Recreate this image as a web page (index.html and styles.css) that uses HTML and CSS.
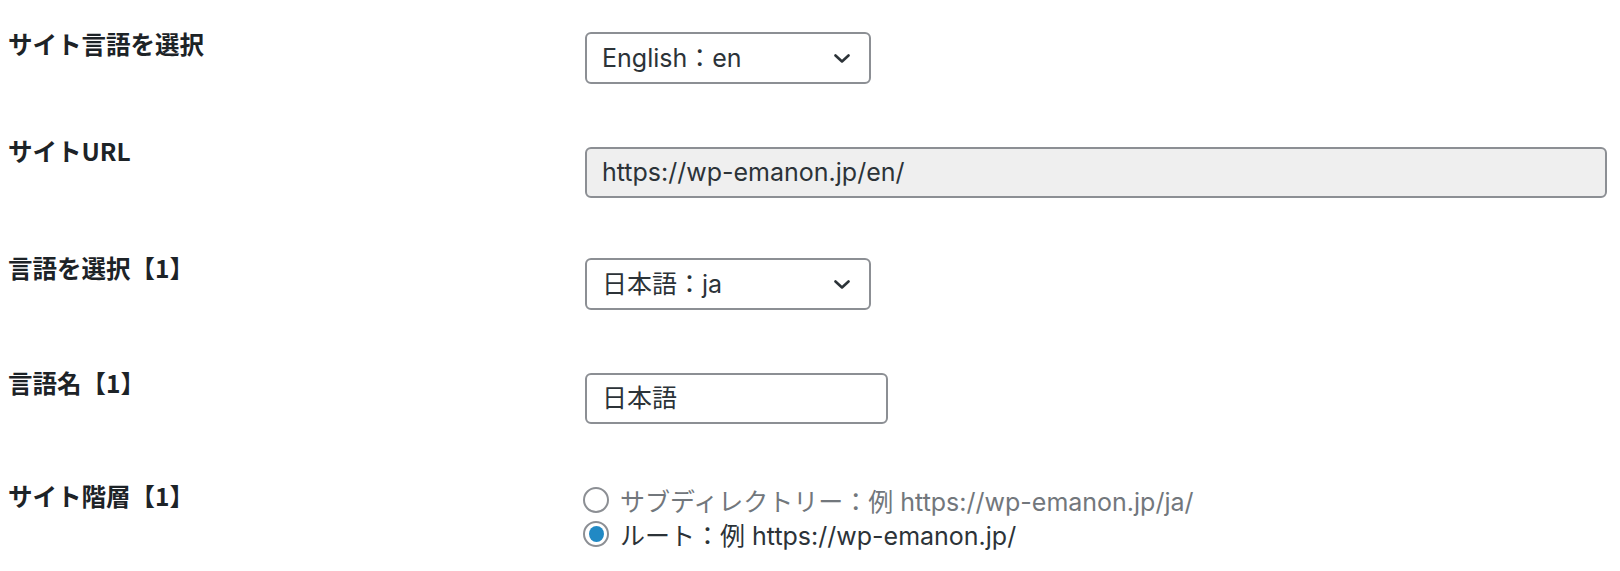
FILE: index.html
```html
<!DOCTYPE html>
<html lang="ja">
<head>
<meta charset="utf-8">
<title>言語設定</title>
<link rel="stylesheet" href="styles.css">
</head>
<body>
<div class="form">
  <div class="row row-1">
    <div class="label label-1">サイト言語を選択</div>
    <div class="control">
      <div class="select">
        <span class="select-text">English：en</span>
        <svg class="chevron" width="16" height="9" viewBox="0 0 16 9"><polyline points="1.5,1.5 8,7.5 14.5,1.5" fill="none" stroke="#2c3338" stroke-width="2.6" stroke-linecap="round" stroke-linejoin="round"/></svg>
      </div>
    </div>
  </div>
  <div class="row row-2">
    <div class="label label-2">サイトURL</div>
    <div class="control control-wide">
      <div class="input input-disabled">https://wp-emanon.jp/en/</div>
    </div>
  </div>
  <div class="row row-3">
    <div class="label">言語を選択【1】</div>
    <div class="control">
      <div class="select">
        <span class="select-text">日本語：ja</span>
        <svg class="chevron" width="16" height="9" viewBox="0 0 16 9"><polyline points="1.5,1.5 8,7.5 14.5,1.5" fill="none" stroke="#2c3338" stroke-width="2.6" stroke-linecap="round" stroke-linejoin="round"/></svg>
      </div>
    </div>
  </div>
  <div class="row row-4">
    <div class="label">言語名【1】</div>
    <div class="control">
      <div class="input input-short">日本語</div>
    </div>
  </div>
  <div class="row row-5">
    <div class="label">サイト階層【1】</div>
    <div class="control radios">
      <label class="radio radio-off"><span class="circle"></span><span>サブディレクトリー：例 https://wp-emanon.jp/ja/</span></label>
      <label class="radio radio-on"><span class="circle"><span class="dot"></span></span><span>ルート：例 https://wp-emanon.jp/</span></label>
    </div>
  </div>
</div>
</body>
</html>
```
FILE: styles.css
```css
html, body {
  margin: 0;
  padding: 0;
  background: #ffffff;
}
body {
  font-family: Inter, "Noto Sans CJK JP", sans-serif;
  font-size: 25px;
  color: #2c3338;
  overflow: hidden;
}
.form {
  padding-left: 8px;
  padding-right: 13px;
}
.row {
  display: flex;
  align-items: flex-start;
}
.row-1 { height: 115px; }
.row-2 { height: 111px; }
.row-3 { height: 115px; }
.row-4 { height: 113px; }
.row-5 { height: 117px; }
.label {
  width: 577px;
  flex: none;
  margin-top: 26px;
  font-family: "Noto Sans CJK JP", sans-serif;
  font-weight: 700;
  font-size: 24.5px;
  line-height: 1.3;
  color: #1d2327;
}
.label-1 { margin-top: 28px; }
.label-2 { margin-top: 20px; }
.control {
  margin-top: 32px;
}
.control-wide {
  flex: 1;
}
.select {
  box-sizing: border-box;
  width: 286px;
  height: 52px;
  border: 2px solid #8c8f94;
  border-radius: 6px;
  display: flex;
  align-items: center;
  justify-content: space-between;
  padding: 0 19px 0 15px;
  background: #fff;
}
.select-text {
  line-height: 1;
}
.chevron {
  display: block;
  flex: none;
}
.input {
  box-sizing: border-box;
  height: 51px;
  border: 2px solid #8c8f94;
  border-radius: 6px;
  display: flex;
  align-items: center;
  padding: 0 15px;
  background: #fff;
  line-height: 1;
}
.input-disabled {
  background: #efefef;
  width: 100%;
}
.input-short {
  width: 303px;
}
.radios {
  display: flex;
  flex-direction: column;
  margin-left: -2px;
  margin-top: 29px;
}
.radio {
  display: flex;
  align-items: center;
  height: 34px;
  gap: 11px;
}
.radio-off { color: #72777c; }
.radio-on { color: #2c3338; }
.circle {
  box-sizing: border-box;
  width: 26px;
  height: 26px;
  border: 2px solid #8c8f94;
  border-radius: 50%;
  background: #fff;
  display: flex;
  align-items: center;
  justify-content: center;
  flex: none;
}
.dot {
  width: 15px;
  height: 16px;
  border-radius: 50%;
  background: #2189c4;
}
```
